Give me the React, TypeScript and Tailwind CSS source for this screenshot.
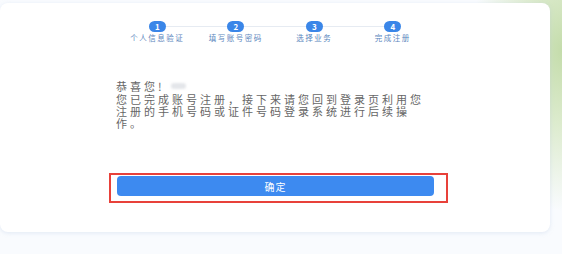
import React from 'react';

const steps = ['个人信息验证', '填写账号密码', '选择业务', '完成注册'];

const StepBar: React.FC = () => {
  return (
    <div className="relative ml-[118px] mt-[17px] flex w-[314px]">
      <div className="absolute left-[39px] right-[39px] top-[5px] h-px bg-[#e6ebf2]" />
      {steps.map((label, i) => (
        <div key={label} className="relative flex w-[79px] flex-col items-center">
          <div className="flex h-[11px] w-[17px] items-center justify-center rounded-full bg-[#3a86e8] text-[8px] font-bold leading-none text-white">
            {i + 1}
          </div>
          <div className="mt-px whitespace-nowrap text-[7.5px] leading-[9px] tracking-[1.5px] text-[#5a86bd]">
            {label}
          </div>
        </div>
      ))}
    </div>
  );
};

const App: React.FC = () => {
  return (
    <div
      className="h-[254px] w-[562px] overflow-hidden bg-[radial-gradient(ellipse_90px_160px_at_100%_20%,#c4dcab_0%,#dcebcd_45%,#f9fbfe_100%)] pt-[3px]"
      style={{ fontFamily: '"Noto Sans CJK SC", "Liberation Sans", sans-serif' }}
    >
      <div className="h-[229px] w-[550px] rounded-[8px] bg-white pt-px shadow-[0_1px_4px_rgba(180,200,225,0.35)]">
        <StepBar />

        <div className="ml-[116px] mt-[38px] w-[320px] text-[11px] leading-[12px] tracking-[3px] text-[#666]">
          <div className="flex items-center">
            <span>恭喜您!</span>
            <span className="ml-[6px] h-[6px] w-[15px] rounded-sm bg-[#e4e6ea] blur-[1px]" />
          </div>
          <div className="mt-px">您已完成账号注册，接下来请您回到登录页利用您</div>
          <div>注册的手机号码或证件号码登录系统进行后续操</div>
          <div>作。</div>
        </div>

        <div className="ml-[109px] mt-[44px] h-[30px] w-[339px] border-2 border-[#e8413a] pl-[6px] pr-[12px] pt-px">
          <button className="flex h-[20px] w-full items-center justify-center rounded-[4px] bg-[#3d8af0] text-[10px] tracking-[1px] text-white">
            确定
          </button>
        </div>
      </div>
    </div>
  );
};

export default App;
